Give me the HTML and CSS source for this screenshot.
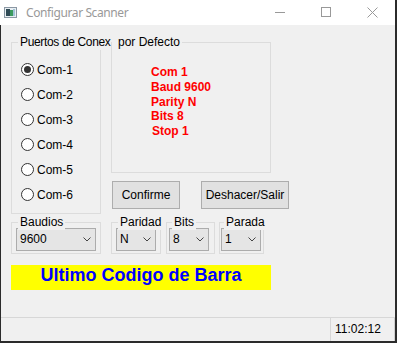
FILE: index.html
```html
<!DOCTYPE html>
<html lang="es">
<head>
<meta charset="utf-8">
<title>Configurar Scanner</title>
<link rel="stylesheet" href="styles.css">
</head>
<body>
<div class="window">
  <div class="titlebar">
    <svg class="app-icon" width="13" height="11" viewBox="0 0 13 11">
      <rect x="0.5" y="0.5" width="12" height="10" fill="#e8eef2" stroke="#8a97a3"/>
      <rect x="2" y="2" width="4" height="7" fill="#2f4a55"/>
      <rect x="6" y="3" width="3" height="6" fill="#3c9a5e"/>
      <rect x="9" y="2" width="2" height="7" fill="#9fc3d6"/>
    </svg>
    <span class="title">Configurar Scanner</span>
    <div class="controls">
      <div class="ctrl"><svg width="10" height="10" viewBox="0 0 10 10"><line x1="0" y1="5.5" x2="10" y2="5.5" stroke="#999" stroke-width="1"/></svg></div>
      <div class="ctrl"><svg width="10" height="10" viewBox="0 0 10 10"><rect x="0.5" y="0.5" width="9" height="9" fill="none" stroke="#999" stroke-width="1"/></svg></div>
      <div class="ctrl"><svg width="11" height="11" viewBox="0 0 11 11"><path d="M0.5 0.5 L10.5 10.5 M10.5 0.5 L0.5 10.5" stroke="#999" stroke-width="1"/></svg></div>
    </div>
  </div>
  <div class="client">
    <div class="main">
      <div class="row1">
        <div class="group g-ports">
          <span class="glabel tight">Puertos de Conex</span>
          <div class="radio-row"><span class="radio on"></span><span>Com-1</span></div>
          <div class="radio-row"><span class="radio"></span><span>Com-2</span></div>
          <div class="radio-row"><span class="radio"></span><span>Com-3</span></div>
          <div class="radio-row"><span class="radio"></span><span>Com-4</span></div>
          <div class="radio-row"><span class="radio"></span><span>Com-5</span></div>
          <div class="radio-row"><span class="radio"></span><span>Com-6</span></div>
        </div>
        <div class="rightcol">
          <div class="group g-info">
            <span class="glabel over">por Defecto</span>
            <div class="info">
              <div>Com 1</div>
              <div>Baud 9600</div>
              <div>Parity N</div>
              <div>Bits 8</div>
              <div class="shift">Stop 1</div>
            </div>
          </div>
          <div class="buttons">
            <button class="btn btn-confirm">Confirme</button>
            <button class="btn btn-undo">Deshacer/Salir</button>
          </div>
        </div>
      </div>
      <div class="row2">
        <div class="group g-small g-baud">
          <span class="glabel">Baudios</span>
          <div class="combo w80"><span>9600</span><svg width="8" height="5" viewBox="0 0 8 5"><polyline points="0.5,0.5 4,4 7.5,0.5" fill="none" stroke="#444" stroke-width="1"/></svg></div>
        </div>
        <div class="group g-small g-par">
          <span class="glabel">Paridad</span>
          <div class="combo w40"><span>N</span><svg width="8" height="5" viewBox="0 0 8 5"><polyline points="0.5,0.5 4,4 7.5,0.5" fill="none" stroke="#444" stroke-width="1"/></svg></div>
        </div>
        <div class="group g-small g-bits">
          <span class="glabel l5">Bits</span>
          <div class="combo w40"><span>8</span><svg width="8" height="5" viewBox="0 0 8 5"><polyline points="0.5,0.5 4,4 7.5,0.5" fill="none" stroke="#444" stroke-width="1"/></svg></div>
        </div>
        <div class="group g-small g-stop">
          <span class="glabel l4">Parada</span>
          <div class="combo w40"><span>1</span><svg width="8" height="5" viewBox="0 0 8 5"><polyline points="0.5,0.5 4,4 7.5,0.5" fill="none" stroke="#444" stroke-width="1"/></svg></div>
        </div>
      </div>
      <div class="banner">Ultimo Codigo de Barra</div>
    </div>
    <div class="status">
      <div class="status-panel">11:02:12</div>
    </div>
  </div>
</div>
</body>
</html>
```

FILE: styles.css
```css
* { box-sizing: border-box; }

body {
  margin: 0;
  width: 397px;
  height: 343px;
  overflow: hidden;
  background: #2b2b2b;
  font-family: "Liberation Sans", Arial, sans-serif;
  font-size: 12px;
  color: #000;
}

.window {
  width: 395px;
  height: 341px;
  display: flex;
  flex-direction: column;
}

.titlebar {
  height: 25px;
  flex: none;
  background: #fff;
  display: flex;
  align-items: center;
}

.app-icon {
  margin-left: 4px;
  flex: none;
}

.title {
  margin-left: 9px;
  font-family: "Noto Sans", "Open Sans", sans-serif;
  font-size: 12px;
  letter-spacing: -0.4px;
  color: #999;
}

.controls {
  margin-left: auto;
  display: flex;
}

.ctrl {
  width: 46px;
  height: 25px;
  display: flex;
  justify-content: center;
  align-items: flex-start;
  padding-top: 7px;
}

.client {
  flex: 1;
  margin-left: 1px;
  background: #f0f0f0;
  display: flex;
  flex-direction: column;
}

.main {
  flex: 1;
  padding: 17px 0 0 10px;
}

.row1 {
  display: flex;
  gap: 10px;
  align-items: flex-start;
}

.group {
  position: relative;
  border: 1px solid #dcdcdc;
}

.glabel {
  position: absolute;
  top: -8px;
  left: 6px;
  padding: 0 2px;
  background: #f0f0f0;
  line-height: 15px;
  white-space: nowrap;
  font-weight: normal;
  color: #000;
}

.glabel.tight { letter-spacing: -0.35px; }
.glabel.over { left: 0; padding-left: 6px; }
.glabel.l5 { left: 5px; }
.glabel.l4 { left: 4px; }

.g-ports {
  width: 90px;
  height: 172px;
  padding: 14px 0 0 9px;
}

.radio-row {
  display: flex;
  align-items: center;
  height: 25px;
  gap: 3px;
}

.radio {
  flex: none;
  width: 13px;
  height: 13px;
  border-radius: 50%;
  border: 1px solid #333;
  background: #fff;
  display: flex;
  align-items: center;
  justify-content: center;
}

.radio.on::after {
  content: "";
  width: 7px;
  height: 7px;
  border-radius: 50%;
  background: #333;
}

.rightcol {
  display: flex;
  flex-direction: column;
}

.g-info {
  width: 160px;
  height: 131px;
  padding: 22px 0 0 39px;
}

.info {
  color: #ff0000;
  font-weight: bold;
  line-height: 14.75px;
}

.info .shift { margin-left: 1px; }

.buttons {
  display: flex;
  margin-top: 8px;
  padding-left: 1px;
  gap: 21px;
}

.btn {
  height: 28px;
  padding: 0;
  margin: 0;
  background: #e1e1e1;
  border: 1px solid #adadad;
  border-radius: 0;
  font: inherit;
  color: #000;
  display: flex;
  align-items: center;
  justify-content: center;
}

.btn-confirm { width: 68px; }
.btn-undo { width: 88px; }

.row2 {
  display: flex;
  margin-top: 8px;
  align-items: flex-start;
}

.g-small {
  height: 32px;
  padding-top: 5px;
}

.g-baud { width: 90px; padding-left: 4px; }
.g-par { width: 50px; margin-left: 10px; padding-left: 4px; }
.g-bits { width: 49px; margin-left: 5px; padding-left: 2px; }
.g-stop { width: 45px; margin-left: 4px; padding-left: 1px; }

.combo {
  height: 23px;
  border: 1px solid #acacac;
  background: #e5e5e5;
  display: flex;
  align-items: center;
  padding-left: 3px;
  line-height: 21px;
}

.combo svg {
  margin-left: auto;
  margin-right: 4px;
  flex: none;
}

.w80 { width: 80px; }
.w40 { width: 40px; }

.banner {
  margin-top: 11px;
  width: 260px;
  height: 25px;
  background: #ffff00;
  color: #0000ff;
  font-size: 18px;
  font-weight: bold;
  text-align: center;
  line-height: 21px;
  padding-bottom: 4px;
}

.status {
  height: 24px;
  flex: none;
  border-top: 1px solid #d7d7d7;
  display: flex;
  justify-content: flex-end;
}

.status-panel {
  width: 65px;
  border-left: 1px solid #d7d7d7;
  border-right: 1px solid #cfcfcf;
  padding-left: 4px;
  line-height: 23px;
}
```
